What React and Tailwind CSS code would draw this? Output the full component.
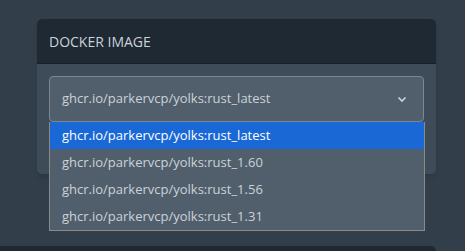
import React from "react";

const options = [
  "ghcr.io/parkervcp/yolks:rust_latest",
  "ghcr.io/parkervcp/yolks:rust_1.60",
  "ghcr.io/parkervcp/yolks:rust_1.56",
  "ghcr.io/parkervcp/yolks:rust_1.31",
];

export default function App() {
  return (
    <div
      className="w-[465px] h-[251px] overflow-hidden bg-[#323f4b] relative"
      style={{ fontFamily: '"Open Sans", "Noto Sans", sans-serif' }}
    >
      <div className="pt-[19px] pl-[37px] w-[436px]">
        <div className="rounded-[5px] bg-[#3e4c59] shadow-md">
          <div className="h-[45px] bg-[#1f2933] rounded-t-[5px] border-b border-[#18202a] flex items-center px-[12px]">
            <span className="text-[14px] text-[#cbd2d9]">DOCKER IMAGE</span>
          </div>
          <div className="px-[12px] pt-[12px] pb-[52px] relative">
            <div className="h-[46px] rounded-[4px] border border-[#7b8794] bg-[#515f6c] flex items-center pl-[12px] pr-[16px] justify-between">
              <span className="text-[13px] text-[#cbd2d9]">{options[0]}</span>
              <svg width="10" height="7" viewBox="0 0 10 7" className="mt-[1px]">
                <path d="M1.5 1.5 L5 5 L8.5 1.5" fill="none" stroke="#cbd2d9" strokeWidth="1.6" />
              </svg>
            </div>
            <div className="absolute left-[12px] right-[11px] top-[58px] bg-[#515f6c] border border-[#8a8a8a] border-t-0 flex flex-col">
              {options.map((o, i) => (
                <div
                  key={o}
                  className={
                    "h-[27px] flex items-center pl-[12px] text-[13px] " +
                    (i === 0 ? "bg-[#1a68d5] text-white" : "text-[#cbd2d9]")
                  }
                >
                  {o}
                </div>
              ))}
            </div>
          </div>
        </div>
      </div>
      <div className="absolute left-0 top-[246px] w-[436px] h-[20px] bg-[#1f2933] rounded-tr-[5px]" />
    </div>
  );
}
